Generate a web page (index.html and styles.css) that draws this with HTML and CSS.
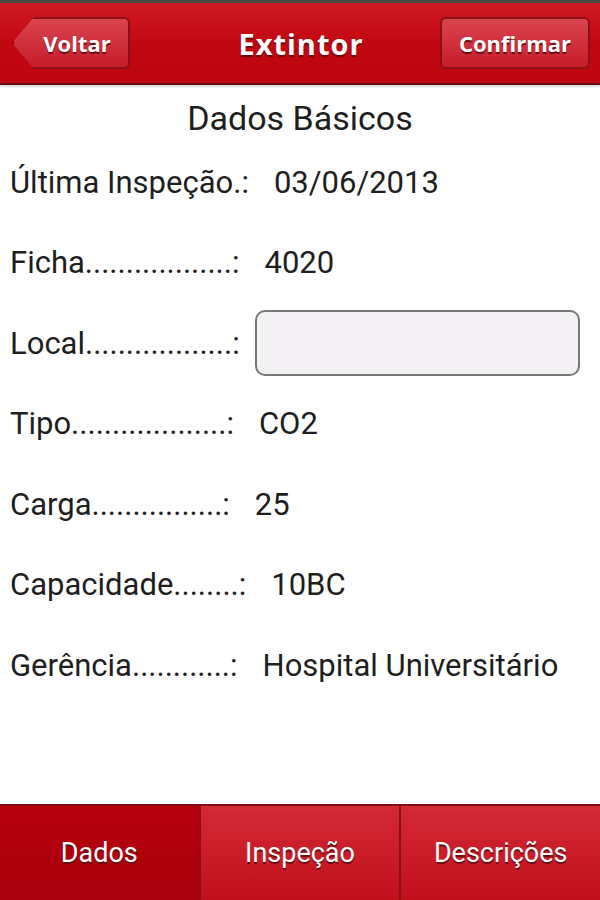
FILE: index.html
```html
<!DOCTYPE html>
<html lang="pt">
<head>
    <meta charset="UTF-8">
    <meta name="viewport" content="width=device-width, initial-scale=1.0">
    <title>Extintor</title>
    <link rel="stylesheet" href="styles.css">
</head>
<body>
    <div class="header">
        <div class="header-left">
            <button class="back-button">Voltar</button>
        </div>
        <span class="title">Extintor</span>
        <div class="header-right">
            <button class="confirm-button">Confirmar</button>
        </div>
    </div>

    <div class="content">
        <div class="section-title">Dados Básicos</div>

        <div class="row">
            <span class="label">Última Inspeção.:</span>
            <span class="value">03/06/2013</span>
        </div>
        <div class="row">
            <span class="label">Ficha..................:</span>
            <span class="value">4020</span>
        </div>
        <div class="row">
            <span class="label">Local..................:</span>
            <input type="text" class="field" id="local-input">
        </div>
        <div class="row">
            <span class="label">Tipo...................:</span>
            <span class="value">CO2</span>
        </div>
        <div class="row">
            <span class="label">Carga................:</span>
            <span class="value">25</span>
        </div>
        <div class="row">
            <span class="label">Capacidade........:</span>
            <span class="value">10BC</span>
        </div>
        <div class="row">
            <span class="label">Gerência............:</span>
            <span class="value">Hospital Universitário</span>
        </div>
    </div>

    <div class="tabs">
        <div class="tab active">Dados</div>
        <div class="tab">Inspeção</div>
        <div class="tab">Descrições</div>
    </div>
</body>
</html>
```

FILE: styles.css
```css
body {
    font-family: Roboto, 'Noto Sans', sans-serif;
    background-color: #ffffff;
    margin: 0;
    padding: 0;
    display: flex;
    flex-direction: column;
    height: 100vh;
    color: #1e1e1e;
}

.header {
    height: 80px;
    background: linear-gradient(#cf1a24, #c20812 50%, #bd0611);
    border-top: 3px solid #4a4a4a;
    border-bottom: 2px solid #6a0a0e;
    box-shadow: 0 2px 2px #d8d8d8;
    display: grid;
    grid-template-columns: 1fr auto 1fr;
    align-items: center;
    padding: 0 10px 0 12px;
    flex-shrink: 0;
}

.header-right {
    display: flex;
    justify-content: flex-end;
}

.title {
    color: white;
    font-family: 'Open Sans', Roboto, sans-serif;
    font-size: 29px;
    font-weight: bold;
    letter-spacing: 1px;
    text-shadow: 0 2px 1px #6a0a0e;
}

.back-button,
.confirm-button {
    font-family: 'Open Sans', Roboto, sans-serif;
    font-weight: bold;
    font-size: 22px;
    color: white;
    text-shadow: 0 2px 0 #6a0a0e;
    background: linear-gradient(#d94450, #c61d2a);
    border: 2px solid #8a0f16;
    height: 52px;
    cursor: pointer;
}

.back-button {
    width: 118px;
    padding-left: 18px;
    border-radius: 0 6px 6px 0;
    clip-path: polygon(0 50%, 22px 0, 100% 0, 100% 100%, 22px 100%);
}

.confirm-button {
    width: 150px;
    border-radius: 6px;
}

.content {
    flex: 1;
    padding: 3px 10px 0;
}

.section-title {
    text-align: center;
    font-size: 34px;
    height: 54px;
    line-height: 60px;
}

.row {
    display: flex;
    align-items: center;
    height: 80.5px;
    font-size: 31px;
}

.label {
    margin-right: 25px;
    white-space: nowrap;
}

.field {
    width: 325px;
    height: 66px;
    box-sizing: border-box;
    border: 2px solid #777;
    border-radius: 10px;
    background-color: #f4f1f4;
    margin-left: -10px;
    outline: none;
}

.tabs {
    display: flex;
    height: 94px;
    border-top: 2px solid #7a0d12;
    flex-shrink: 0;
}

.tab {
    flex: 1;
    display: flex;
    align-items: center;
    justify-content: center;
    color: white;
    font-size: 27px;
    text-shadow: 0 2px 0 #6a0a0e;
    background: linear-gradient(#d32a36, #c10f1c);
    border-left: 2px solid #8a0f16;
}

.tab:first-child {
    border-left: none;
}

.tab.active {
    background: linear-gradient(#b8000e, #a8000c);
}
```
